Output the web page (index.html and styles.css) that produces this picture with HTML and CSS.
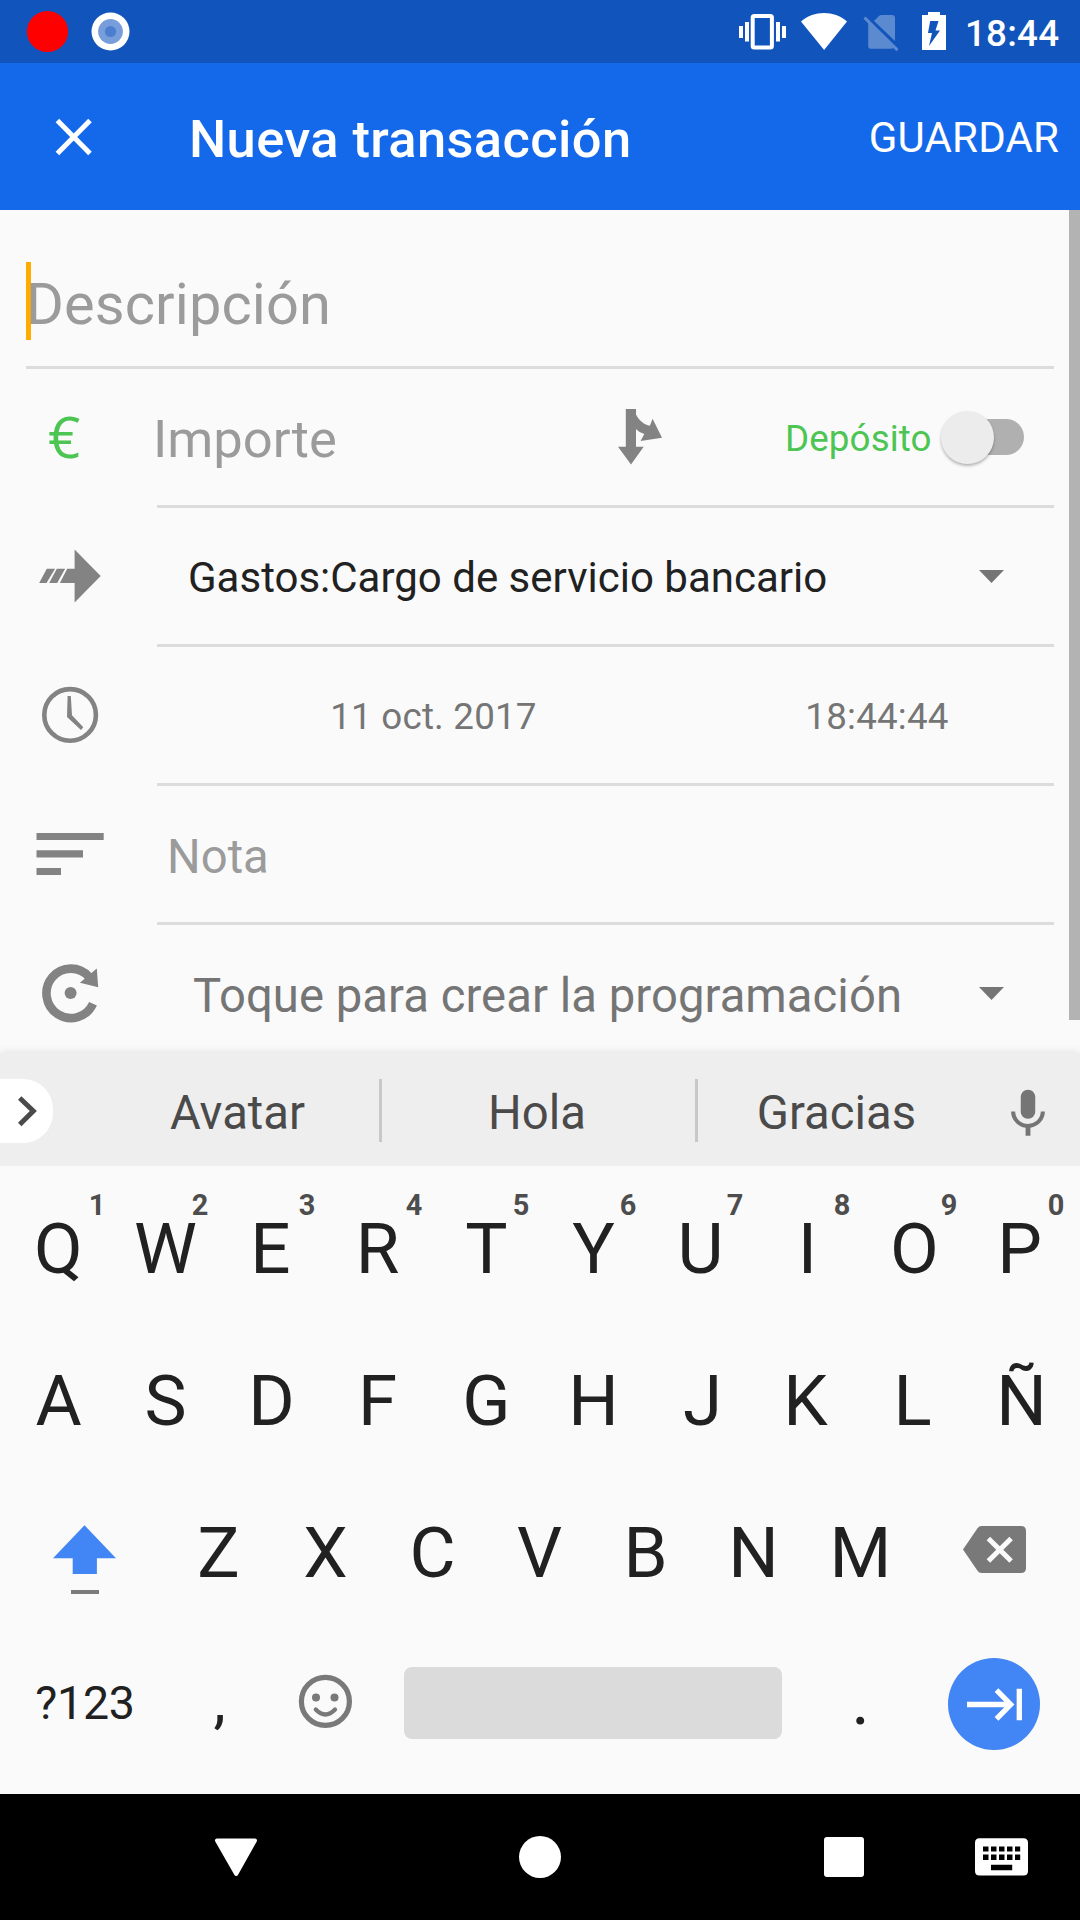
FILE: index.html
```html
<!DOCTYPE html>
<html lang="es">
<head>
<meta charset="utf-8">
<title>Nueva transacción</title>
<link rel="stylesheet" href="styles.css">
</head>
<body>
<div class="screen">
  <header class="status">
    <svg class="status-left" width="110" height="63" viewBox="24 0 110 63">
      <circle cx="47.5" cy="31.5" r="20.6" fill="#f00"/>
      <circle cx="110.5" cy="31.5" r="19" fill="#fff"/>
      <circle cx="110.5" cy="31.5" r="12.4" fill="#779ddb"/>
      <circle cx="110.5" cy="31.5" r="5.6" fill="#4b7ecf"/>
    </svg>
    <svg class="status-right" width="212" height="63" viewBox="738 0 212 63" fill="#fff">
      <rect x="752.7" y="16" width="19.2" height="31.5" rx="1.5" fill="none" stroke="#fff" stroke-width="4"/>
      <path d="M739 26h4v12h-4zM745 22h4v19.500h-4zM776 22h4v19.500h-4zM782 26h4v12h-4z"/>
      <path d="M824.100 50L801 21.500C814 10.200 834 10.200 847 21.500z"/>
      <g fill="#5c8ad1">
        <path d="M874 21l5-5q1-1 2.500-1H892q3 0 3 3v23L874 21z"/>
        <path d="M868.200 22L893.500 47.500q-1 1.200-2.500 1.200H871q-2.800 0-2.800-2.800z"/>
        <path d="M865.500 16.500l33 32.500-2 2.200-33-32.500z"/>
      </g>
      <path fill-rule="evenodd" d="M922 15h6v-3h12v3h6v35h-24zM930.200 21L928 33h4l-3 13L940 30.500h-4.500L938.500 21z"/>
    </svg>
    <span class="clock">18:44</span>
  </header>

  <header class="toolbar">
    <svg class="close" width="40" height="40" viewBox="0 0 40 40"><path d="M3.400 3.500L36 36.500M36 3.500L3.400 36.500" stroke="#fff" stroke-width="5"/></svg>
    <h1 class="title">Nueva transacción</h1>
    <span class="save">GUARDAR</span>
  </header>

  <main class="form">
    <div class="row description"><span class="hint desc-hint">Descripción</span><i class="cursor"></i></div>
    <div class="row">
      <div class="lead euro">€</div>
      <div class="field amount">
        <span class="hint amount-hint">Importe</span>
        <svg class="split" width="46" height="58" viewBox="617 408 46 58" fill="#838383"><path d="M625.800 409H636V414.500C639 420.500 644.500 425 649.900 425.700L652.600 418.700L662 437.700L640.600 441L644.300 434C641 433 638 431 636 429V446.700H643.700L631 464.500L618 446.700H625.800z"/></svg>
        <span class="deposit">Depósito</span>
        <span class="switch"><i class="thumb"></i></span>
      </div>
    </div>
    <div class="row">
      <div class="lead"><svg width="157" height="136" viewBox="0 508 157 136" fill="#838383"><path d="M46.800 568.700H55.100L46.500 583H39.200zM56.800 568.700H65.100L57.200 583H49.200zM67.200 568.700H74.600V549.500L100.700 576L74.600 602.500V583H59.900z"/></svg></div>
      <div class="field account"><span class="account-name">Gastos:Cargo de servicio bancario</span><i class="caret"></i></div>
    </div>
    <div class="row">
      <div class="lead"><svg width="157" height="136" viewBox="0 647 157 136"><circle cx="70.100" cy="714.900" r="25.800" fill="none" stroke="#838383" stroke-width="4.600"/><path fill="#838383" d="M67.600 696H70.800L72 715.300L83.300 727.200L81 730L67 717z"/></svg></div>
      <div class="field datetime"><span class="date">11 oct. 2017</span><span class="time">18:44:44</span></div>
    </div>
    <div class="row">
      <div class="lead"><svg width="157" height="136" viewBox="0 786 157 136" fill="#838383"><path d="M36.500 833h67.200v7H36.500zM36.500 850.300H83v7.300H36.500zM36.500 868H61v7H36.500z"/></svg></div>
      <div class="field"><span class="hint note-hint">Nota</span></div>
    </div>
    <div class="row">
      <div class="lead"><svg width="157" height="136" viewBox="0 925 157 136" fill="#838383"><path d="M93 1003.700A24.400 24.700 0 1 1 89 976.800" fill="none" stroke="#838383" stroke-width="8.600"/><path d="M96.800 968.500L98.200 987.200L79.900 982.700z"/><circle cx="70.600" cy="993" r="6"/></svg></div>
      <div class="field schedule"><span class="schedule-name">Toque para crear la programación</span><i class="caret"></i></div>
    </div>
    <i class="scrollbar"></i>
  </main>

  <section class="keyboard">
    <div class="suggestions">
      <div class="expand"><svg width="20" height="34" viewBox="18 1094 20 34"><path d="M19.700 1098L33.300 1111L19.700 1124.500" fill="none" stroke="#4a4a4a" stroke-width="5"/></svg></div>
      <span class="word word-1">Avatar</span><i class="rule"></i>
      <span class="word word-2">Hola</span><i class="rule"></i>
      <span class="word word-3">Gracias</span>
      <svg class="mic" width="58" height="58" viewBox="0 0 24 24" fill="#757575"><path d="M12 14c1.660 0 2.990-1.340 2.990-3L15 5c0-1.660-1.340-3-3-3S9 3.340 9 5v6c0 1.660 1.340 3 3 3zm5.300-3c0 3-2.540 5.100-5.300 5.100S6.700 14 6.700 11H5c0 3.410 2.720 6.230 6 6.720V21h2v-3.280c3.280-.48 6-3.300 6-6.720h-1.700z"/></svg>
    </div>
    <div class="keys">
      <div class="key-row">
        <span class="key">Q<sup class="one">1</sup></span><span class="key">W<sup>2</sup></span><span class="key stem">E<sup>3</sup></span><span class="key stem">R<sup>4</sup></span><span class="key">T<sup>5</sup></span><span class="key">Y<sup>6</sup></span><span class="key">U<sup>7</sup></span><span class="key">I<sup>8</sup></span><span class="key">O<sup>9</sup></span><span class="key stem">P<sup>0</sup></span>
      </div>
      <div class="key-row">
        <span class="key">A</span><span class="key">S</span><span class="key bowl">D</span><span class="key stem">F</span><span class="key">G</span><span class="key">H</span><span class="key hook">J</span><span class="key stem">K</span><span class="key stem">L</span><span class="key">Ñ</span>
      </div>
      <div class="key-row">
        <span class="key wide"><svg width="160" height="152" viewBox="5 1476 160 152"><path fill="#4285f4" d="M84.500 1525.200L116 1558.300H96.900V1574H72.700V1558.300H53z"/><path fill="#7b7b7b" d="M71 1590h28v4H71z"/></svg></span>
        <span class="key">Z</span><span class="key">X</span><span class="key">C</span><span class="key">V</span><span class="key bowl">B</span><span class="key">N</span><span class="key">M</span>
        <span class="key wide"><svg width="160" height="152" viewBox="914 1476 160 152"><path fill="#797979" d="M981.500 1526H1021Q1026 1526 1026 1531V1568Q1026 1573 1021 1573H981.500Q979 1573 977.500 1570.800L963 1549.500L977.500 1528.200Q979 1526 981.500 1526z"/><path d="M988.400 1538.500L1011.100 1561M1011.100 1538.500L988.400 1561" stroke="#fafafa" stroke-width="5"/></svg></span>
      </div>
      <div class="key-row">
        <span class="key wide symbols">?123</span>
        <span class="key comma">,</span>
        <span class="key"><svg width="107" height="152" viewBox="272 1628 107 152"><circle cx="325.400" cy="1701.400" r="24" fill="none" stroke="#797979" stroke-width="5.200"/><circle cx="316" cy="1697.500" r="4" fill="#797979"/><circle cx="334.500" cy="1697.500" r="4" fill="#797979"/><path d="M315.800 1709.500Q325.400 1719.500 335 1709.500" fill="none" stroke="#797979" stroke-width="4.300" stroke-linecap="round"/></svg></span>
        <span class="key space"></span>
        <span class="key period">.</span>
        <span class="key wide"><svg width="160" height="152" viewBox="914 1628 160 152"><circle cx="994" cy="1704" r="46" fill="#4285f4"/><path d="M967 1704.500H1010.500M996.500 1690.200L1010.700 1704.500L996.500 1718.800M1019.300 1688.700V1720.200" fill="none" stroke="#fff" stroke-width="5.300"/></svg></span>
      </div>
    </div>
  </section>

  <nav class="navbar">
    <svg width="44" height="40" viewBox="214 1837 44 40"><path fill="#fff" stroke="#fff" stroke-width="4" stroke-linejoin="round" d="M217 1840.400H255L236.200 1874z"/></svg>
    <i class="home"></i>
    <i class="recent"></i>
    <svg class="ime" width="53" height="38" viewBox="975 1838.500 53 38"><path fill="#fff" fill-rule="evenodd" d="M979.500 1838.700h44q4.500 0 4.500 4.500v28.300q0 4.500-4.500 4.500h-44q-4.500 0-4.500-4.500v-28.300q0-4.500 4.500-4.500zM983 1847v5h5.500v-5zM991 1847v5h5.500v-5zM999 1847v5h5.500v-5zM1007 1847v5h5.500v-5zM1015 1847v5h5.200v-5zM983 1855v5.500h5.500v-5.500zM991 1855v5.500h5.500v-5.500zM999 1855v5.500h5.500v-5.500zM1007 1855v5.500h5.500v-5.500zM1015 1855v5.500h5.200v-5.500zM991 1865.300v5.500h21.200v-5.500z"/></svg>
  </nav>
</div>
</body>
</html>
```
FILE: styles.css
```css
* { box-sizing: border-box; }
body { margin: 0; font-family: Roboto, sans-serif; }
svg, i { display: block; flex: none; }

.screen { width: 1080px; height: 1920px; overflow: hidden; display: flex; flex-direction: column; background: #fafafa; white-space: nowrap; }

.status { height: 63px; flex: none; display: flex; align-items: center; padding-left: 24px; background: #1154bb; color: #fff; }
.status-right { margin-left: 604px; }
.clock { margin-left: 15px; padding-top: 3px; font-size: 36.75px; font-weight: 500; letter-spacing: .2px; }

.toolbar { height: 147px; flex: none; display: flex; align-items: center; padding: 0 21px 0 54px; background: #1469eb; color: #fff; }
.title { flex: 1; margin: 0; padding: 5px 0 0 95px; font-size: 52.5px; font-weight: 500; letter-spacing: .36px; }
.save { padding-top: 2px; font-size: 42px; letter-spacing: .15px; }

.form { position: relative; height: 843px; flex: none; overflow: hidden; }
.row { height: 139px; display: flex; margin-right: 26px; }
.description { position: relative; height: 159px; margin-left: 26px; border-bottom: 3px solid #dcdcdc; align-items: center; }
.hint { color: #9b9b9b; }
.desc-hint { position: relative; z-index: 1; padding-top: 31px; font-size: 57.75px; letter-spacing: .13px; }
.cursor { position: absolute; left: 0; top: 52px; width: 5px; height: 78px; background: #ffab00; }
.lead { width: 157px; height: 136px; flex: none; }
.euro { padding: 0 0 0 48px; font: 500 56.5px/136px "Open Sans", sans-serif; font-stretch: 88%; color: #4cc552; }
.field { flex: 1; display: flex; align-items: center; border-bottom: 3px solid #dcdcdc; }
.amount-hint { margin-left: -4px; padding-top: 3px; width: 464px; font-size: 52.5px; }
.deposit { margin-left: 122px; padding-top: 3px; width: 156px; font-size: 36.75px; letter-spacing: .12px; color: #4cc552; }
.switch { width: 74px; height: 36px; margin-left: 9px; border-radius: 18px; background: #b0b0b0; display: flex; align-items: center; }
.thumb { width: 53px; height: 53px; margin-left: -9px; border-radius: 50%; background: #ececec; box-shadow: 0 2px 3px rgba(0, 0, 0, .28); }
.account, .schedule { justify-content: space-between; padding-right: 50px; }
.account-name { padding: 3px 0 0 31px; font-size: 42px; color: #212121; }
.schedule-name { padding: 5px 0 0 36px; font-size: 47.25px; letter-spacing: .04px; color: #757575; }
.caret { width: 25px; height: 13px; margin-top: 1px; background: #757575; clip-path: polygon(0 0, 100% 0, 50% 100%); }
.datetime { font-size: 36.75px; color: #757575; padding-top: 3px; letter-spacing: .2px; }
.date { width: 553px; text-align: center; }
.time { width: 334px; text-align: center; }
.note-hint { padding: 5px 0 0 10px; font-size: 47.25px; }
.scrollbar { position: absolute; right: 0; top: 0; width: 11px; height: 810px; background: #b3b3b3; }

.keyboard { position: relative; height: 741px; flex: none; background: #fafafa; box-shadow: 0 0 8px rgba(0, 0, 0, .12); }
.suggestions { height: 113px; display: flex; align-items: center; background: #eee; color: #4a4a4a; font-size: 47.25px; }
.expand { width: 53px; height: 64px; padding: 15px 0 0 18px; margin-top: 2px; border-radius: 0 30px 30px 0; background: #fff; }
.word { padding-top: 7px; text-align: center; }
.word-1 { width: 283px; margin-left: 43px; }
.rule { width: 3px; height: 63px; margin-top: 2px; background: #c8c8c8; }
.word-2 { width: 313px; padding-right: 3px; }
.word-3 { width: 279px; padding-right: 2px; }
.mic { margin-left: 22px; margin-top: 8px; }
.keys { padding: 6px 5px 0; }
.key-row { height: 152px; display: flex; }
.key { position: relative; width: 107px; height: 152px; flex: none; display: flex; align-items: center; justify-content: center; padding-top: 1px; color: #212121; font-size: 70.875px; }
.key svg { margin-top: -1px; }
/* Optical centring: glyphs are centred on their ink rather than their advance. */
.stem { padding-right: 4px; }
.bowl { padding-right: 2px; }
.hook { padding-left: 4px; }
.key sup { position: absolute; left: 68px; top: 16px; width: 40px; text-align: center; font-size: 28.9px; line-height: 34px; font-weight: 700; color: #4d4d4d; }
.key .one { left: 72px; }
.wide { width: 160px; }
.symbols { padding: 0 0 2px; font-size: 46.5px; letter-spacing: -.2px; }
.comma { padding: 0 0 7px 2px; font-size: 62px; }
.period { padding: 0 0 9px; }
.space { width: 378px; height: 72px; margin: 39px 25px 0; border-radius: 8px; background: #dbdbdb; }

.navbar { height: 126px; flex: none; display: flex; align-items: center; padding-left: 214px; background: #000; }
.home { width: 42px; height: 42px; margin-left: 261px; border-radius: 50%; background: #fff; }
.recent { width: 40px; height: 40px; margin-left: 263px; border-radius: 3px; background: #fff; }
.ime { margin-left: 111px; margin-top: 0; }
```
